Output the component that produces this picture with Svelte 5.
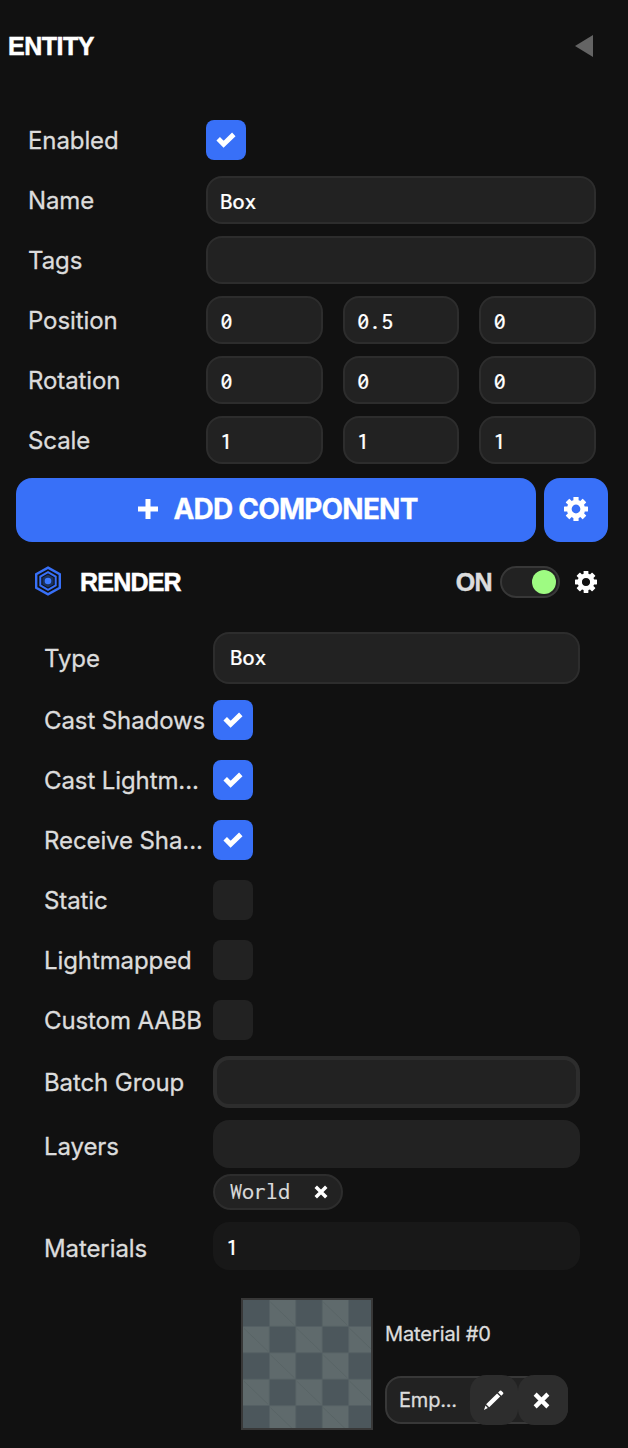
<script>
  const flags = [
    { label: 'Cast Shadows', on: true },
    { label: 'Cast Lightm...', on: true },
    { label: 'Receive Sha...', on: true },
    { label: 'Static', on: false },
    { label: 'Lightmapped', on: false },
    { label: 'Custom AABB', on: false }
  ];
  const vectors = [
    { label: 'Position', values: ['0', '0.5', '0'] },
    { label: 'Rotation', values: ['0', '0', '0'] },
    { label: 'Scale', values: ['1', '1', '1'] }
  ];
  const tiles = Array.from({ length: 25 }, (_, i) => ({ x: i % 5, y: Math.floor(i / 5) }))
    .filter((t) => (t.x + t.y) % 2 === 1);
</script>

{#snippet check(on)}
  <span class="check" class:on>
    {#if on}
      <svg width="20" height="16" viewBox="0 0 20 16"><path d="M2.2 6.8 7.6 12.2 17.8 2.4" fill="none" stroke="#fff" stroke-width="5" /></svg>
    {/if}
  </span>
{/snippet}

{#snippet gear(size)}
  <svg width={size} height={size} viewBox="-12 -12 24 24">
    <g fill="#fff">
      {#each [0, 45, 90, 135] as a}
        <rect x="-2.6" y="-12" width="5.2" height="24" rx=".5" transform="rotate({a})" mask="url(#hub)" />
      {/each}
    </g>
    <mask id="hub" maskUnits="userSpaceOnUse" x="-13" y="-13" width="26" height="26">
      <rect x="-13" y="-13" width="26" height="26" fill="#fff" /><circle r="5" fill="#000" />
    </mask>
    <circle r="6.8" fill="none" stroke="#fff" stroke-width="4.8" />
  </svg>
{/snippet}

{#snippet cross(size)}
  <svg width={size} height={size} viewBox="0 0 16 16"><path d="M2 2 14 14M14 2 2 14" stroke="#fff" stroke-width="4" /></svg>
{/snippet}

<main>
  <header class="top">
    <h1>ENTITY</h1>
    <svg width="18" height="22" viewBox="0 0 18 22"><path d="M0 11 18 0V22Z" fill="#646464" /></svg>
  </header>

  <section class="entity">
    <div class="row"><label>Enabled</label>{@render check(true)}</div>
    <div class="row"><label>Name</label><div class="field"><span class="num">Box</span></div></div>
    <div class="row"><label>Tags</label><div class="field"></div></div>
    {#each vectors as v}
      <div class="row">
        <label>{v.label}</label>
        <div class="vec">
          {#each v.values as n}<div class="field"><span class="num">{n}</span></div>{/each}
        </div>
      </div>
    {/each}
  </section>

  <div class="actions">
    <button class="add">
      <svg width="20" height="20" viewBox="0 0 20 20"><path d="M10 0V20M0 10H20" stroke="#fff" stroke-width="5" /></svg>
      <span>ADD COMPONENT</span>
    </button>
    <button class="cog">{@render gear(24)}</button>
  </div>

  <header class="component">
    <svg class="hex" width="28" height="30" viewBox="-14 -15 28 30">
      <path d="M0-13.4 11.8-6.7V6.7L0 13.4-11.8 6.7V-6.7Z" fill="none" stroke="#3870f8" stroke-width="2.4" />
      <path d="M0-8.8 7.7-4.4V4.4L0 8.8-7.7 4.4V-4.4Z" fill="none" stroke="#3870f8" stroke-width="2" />
      <path d="M0-6.4 5.6-3.2V3.2L0 6.4-5.6 3.2V-3.2Z" fill="#1a3160" />
      <circle r="3.3" fill="#3d7aff" />
    </svg>
    <h2>RENDER</h2>
    <span class="state">ON</span>
    <span class="toggle"><i></i></span>
    {@render gear(22)}
  </header>

  <section class="render">
    <div class="row type"><label>Type</label><div class="field select"><span class="num">Box</span></div></div>
    {#each flags as f}
      <div class="row"><label>{f.label}</label>{@render check(f.on)}</div>
    {/each}
    <div class="row batch"><label>Batch Group</label><div class="field select focus"></div></div>
    <div class="row layers">
      <label>Layers</label>
      <div class="stack">
        <div class="field plain"></div>
        <span class="tag"><b>World</b>{@render cross(14)}</span>
      </div>
    </div>
    <div class="row materials"><label>Materials</label><div class="field count"><span class="num">1</span></div></div>
    <div class="asset">
      <svg class="thumb" viewBox="0 0 128 128">
        <rect width="128" height="128" fill="#4c575c" />
        {#each tiles as t}
          <g transform="translate({t.x * 26.4} {t.y * 26.4})">
            <rect width="26.4" height="26.4" fill="#5f6a6c" />
            <path d="M1 2 25 25" stroke="#566163" stroke-width=".7" />
          </g>
        {/each}
        <path d="M26.4 0V128M52.8 0V128M79.2 0V128M105.6 0V128M0 26.4H128M0 52.8H128M0 79.2H128M0 105.6H128" stroke="#566164" stroke-width=".9" />
      </svg>
      <div class="info">
        <span class="title">Material #0</span>
        <div class="slot">
          <span class="empty">Emp...</span>
          <span class="tool">
            <svg width="22" height="22" viewBox="0 0 22 22" fill="#fff"><path d="M1 21 2.5 16.4 4.8 18.9ZM3.1 15.2 14.1 4.6 17.2 7.6 6.2 18.3ZM15.1 3.6 16.9 1.8Q17.6 1.2 18.3 1.8L20.1 3.6Q20.7 4.3 20.1 5L18.3 6.7Z" /></svg>
          </span>
          <span class="tool last">{@render cross(17)}</span>
        </div>
      </div>
    </div>
  </section>
</main>

<style>
  :global(body) { margin: 0; background: #111; }
  main {
    box-sizing: border-box; width: 628px; height: 1448px; overflow: hidden;
    background: #111; color: #fff; font-family: Inter, sans-serif;
  }
  main :global(*) { box-sizing: border-box; }
  svg { display: block; flex: none; }
  h1, h2, .state { margin: 0; font: 700 25px/30px 'Liberation Sans', Arial, sans-serif; letter-spacing: -0.65px; -webkit-text-stroke: .5px; }
  h1 { letter-spacing: -.5px; }
  h2 { letter-spacing: -.8px; }
  .top { display: flex; align-items: center; justify-content: space-between; height: 92px; padding: 0 35px 0 8px; }
  .entity { padding: 18px 32px 0 28px; }
  .row { display: flex; align-items: center; height: 60px; }
  label {
    flex: none; width: 178px; padding-top: 2px; font-size: 24px; line-height: 32px; -webkit-text-stroke: .3px;
    letter-spacing: -.1px; color: #dcdcdc; white-space: nowrap;
  }
  .field {
    flex: 1; min-width: 0; height: 48px; display: flex; align-items: center; padding: 2px 0 0 12px;
    background: #222; border: 2px solid #2d2d2d; border-radius: 16px;
  }
  .num { margin-left: .5px; font: 500 24px/28px Inconsolata, 'DejaVu Sans Mono', monospace; -webkit-text-stroke: .2px; }
  .vec { flex: 1; display: flex; gap: 20px; }
  .check { flex: none; width: 40px; height: 40px; border-radius: 8px; background: #222; display: flex; align-items: center; justify-content: center; }
  .check.on { background: #3870f8; }
  .actions { display: flex; gap: 8px; padding: 8px 20px 0 16px; }
  button {
    height: 64px; padding: 0 0 2px; border: 0; border-radius: 16px; background: #3870f8; color: #fff;
    display: flex; align-items: center; justify-content: center; font: 700 28px/34px Inter, sans-serif;
  }
  .add { width: 520px; padding-left: 4px; gap: 15px; letter-spacing: -0.8px; -webkit-text-stroke: .3px; }
  .cog { width: 64px; }
  .component { display: flex; align-items: center; height: 80px; padding: 0 31px 0 34px; }
  .hex { margin: -2px 18px 0 0; }
  .state { margin-left: auto; color: #dcdcdc; }
  .toggle { width: 60px; height: 32px; margin: 0 15px 0 8px; padding: 2px; border: 2px solid #383838; border-radius: 16px; background: #222; display: flex; justify-content: flex-end; }
  .toggle i { width: 24px; height: 24px; border-radius: 50%; background: #9efb82; }
  .render { padding: 0 48px 0 44px; }
  .render label { width: 161px; margin-right: 8px; }
  .type { height: 68px; padding-top: 4px; }
  .select { height: 52px; padding: 0 0 2px 15px; }
  .focus { border-width: 4px; }
  .batch { height: 64px; }
  .layers { height: 108px; align-items: flex-start; padding-top: 6px; }
  .layers label { padding-top: 11px; height: 44px; }
  .stack { flex: 1; }
  .plain { border: 0; }
  .tag { display: flex; align-items: center; width: 130px; height: 36px; margin-top: 6px; padding: 0 13px 0 15px; border: 2px solid #2d2d2d; border-radius: 18px; background: #222; justify-content: space-between; }
  .tag b { margin-top: -2px; font: 400 24px/28px Inconsolata, 'DejaVu Sans Mono', monospace; color: #dcdcdc; -webkit-text-stroke: .2px; }
  .materials { height: 48px; }
  .materials label { padding-top: 6px; }
  .count { background: #181818; border: 0; padding-left: 13px; }
  .asset { display: flex; padding: 28px 0 0 197px; }
  .thumb { width: 132px; height: 132px; border: 2px solid #383838; }
  .info { margin-left: 12px; padding-top: 22px; }
  .title { display: block; font-size: 20px; line-height: 28px; color: #dcdcdc; letter-spacing: -.1px; -webkit-text-stroke: .3px; }
  .slot { display: flex; align-items: center; width: 183px; height: 48px; margin-top: 28px; padding-left: 12px; border: 2px solid #383838; border-radius: 16px; background: #222; }
  .empty { flex: none; width: 71px; font-size: 20px; line-height: 28px; letter-spacing: -.2px; color: #dcdcdc; -webkit-text-stroke: .3px; }
  .tool { flex: none; width: 48px; height: 50px; border-radius: 16px; background: #2d2d2d; display: flex; align-items: center; justify-content: center; }
  .last { width: 50px; padding-right: 3px; }
</style>
